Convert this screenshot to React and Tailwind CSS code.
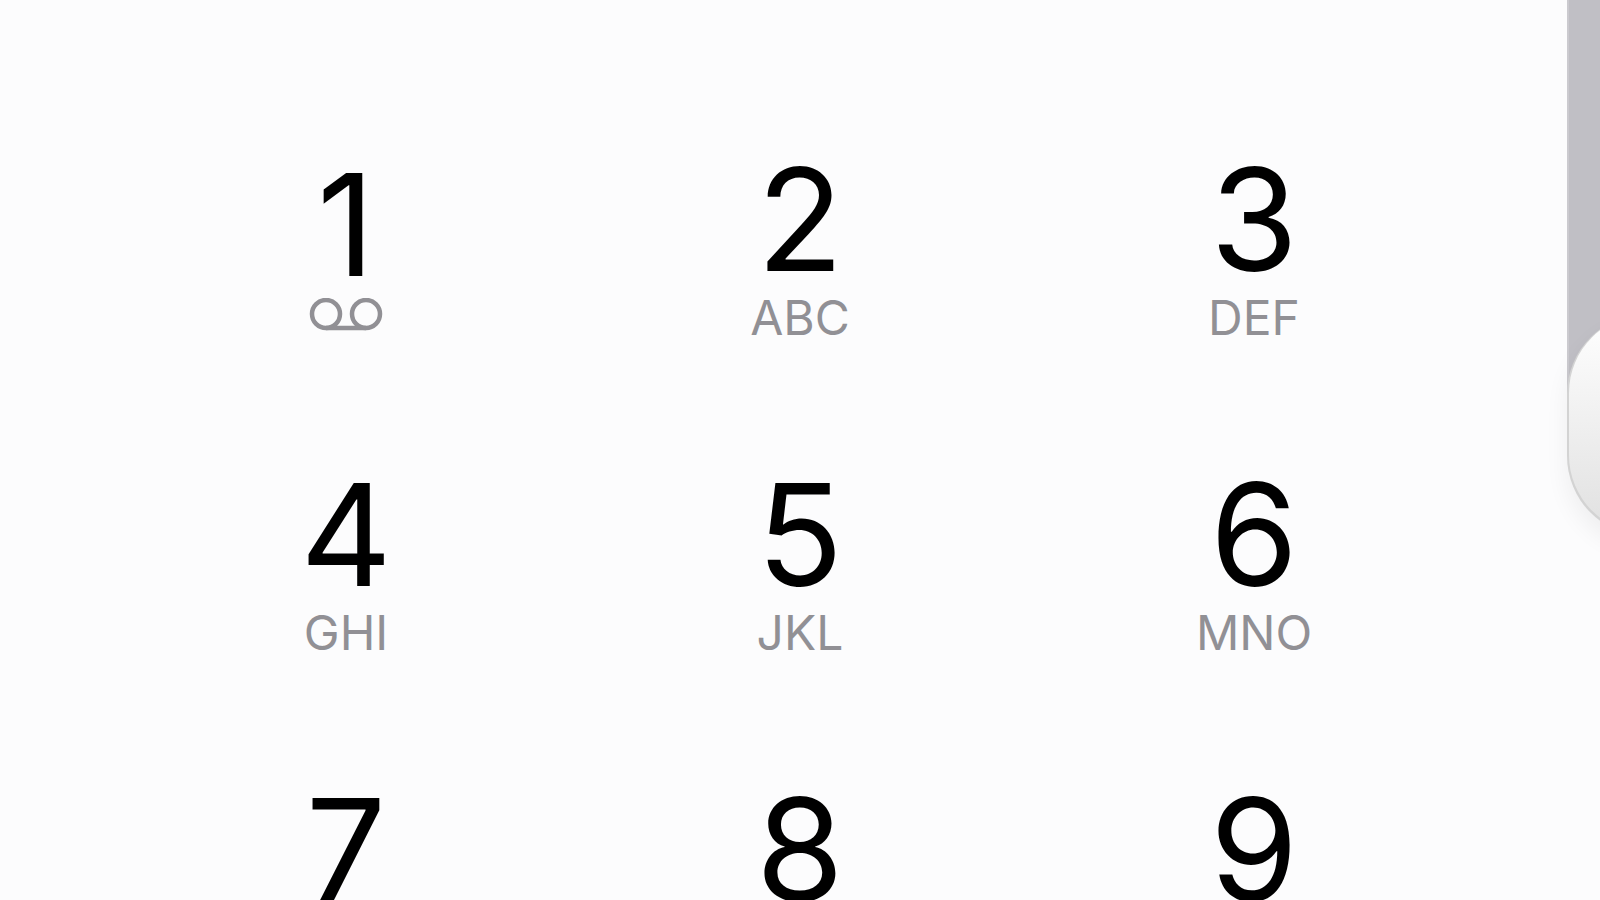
const keys = [
  { digit: '1', voicemail: true },
  { digit: '2', letters: 'ABC' },
  { digit: '3', letters: 'DEF' },
  { digit: '4', letters: 'GHI' },
  { digit: '5', letters: 'JKL' },
  { digit: '6', letters: 'MNO' },
  { digit: '7' },
  { digit: '8' },
  { digit: '9' },
];

function VoicemailIcon() {
  return (
    <svg className="mt-2.5 mb-4 h-[34px] w-[74px] text-[#919095]" viewBox="0 0 74 34" fill="none" stroke="currentColor" aria-hidden="true">
      <circle cx="17" cy="16" r="14" strokeWidth="4.5" />
      <circle cx="57" cy="16" r="14" strokeWidth="4.5" />
      <path d="M17 30h40" strokeWidth="4.5" />
    </svg>
  );
}

function DialKey({ digit, letters, voicemail }) {
  return (
    <button type="button" aria-label={voicemail ? `${digit}, voicemail` : undefined} className="flex h-[315px] flex-col items-center justify-center">
      <span className="text-[142px] leading-[128px] text-black">{digit}</span>
      {voicemail ? <VoicemailIcon /> : <span className="h-[70px] text-[48px] leading-[70px] text-[#919095]">{letters}</span>}
    </button>
  );
}

export default function App() {
  return (
    <main className="relative h-screen overflow-hidden bg-[#fcfcfd] pt-24 font-['Inter',sans-serif]">
      <div className="grid grid-cols-3 px-[119px]">
        {keys.map((key) => (
          <DialKey key={key.digit} {...key} />
        ))}
      </div>

      {/* Slider running off the right edge, with its thumb at the bottom */}
      <div className="absolute -right-[127px] top-0 w-[160px]" aria-hidden="true">
        <div className="h-[394px] border-l-2 border-[#cbcacf] bg-[#c0bfc5]" />
        <div className="absolute left-0 top-[314px] h-[222px] w-[160px] rounded-[80px] bg-[#d3d3d3] pb-0.5 pl-0.5 shadow-[0_12px_24px_rgba(0,0,0,0.06)]">
          <div className="h-full rounded-[79px] bg-linear-to-b from-white to-[#e0e0e0]" />
        </div>
      </div>
    </main>
  );
}
